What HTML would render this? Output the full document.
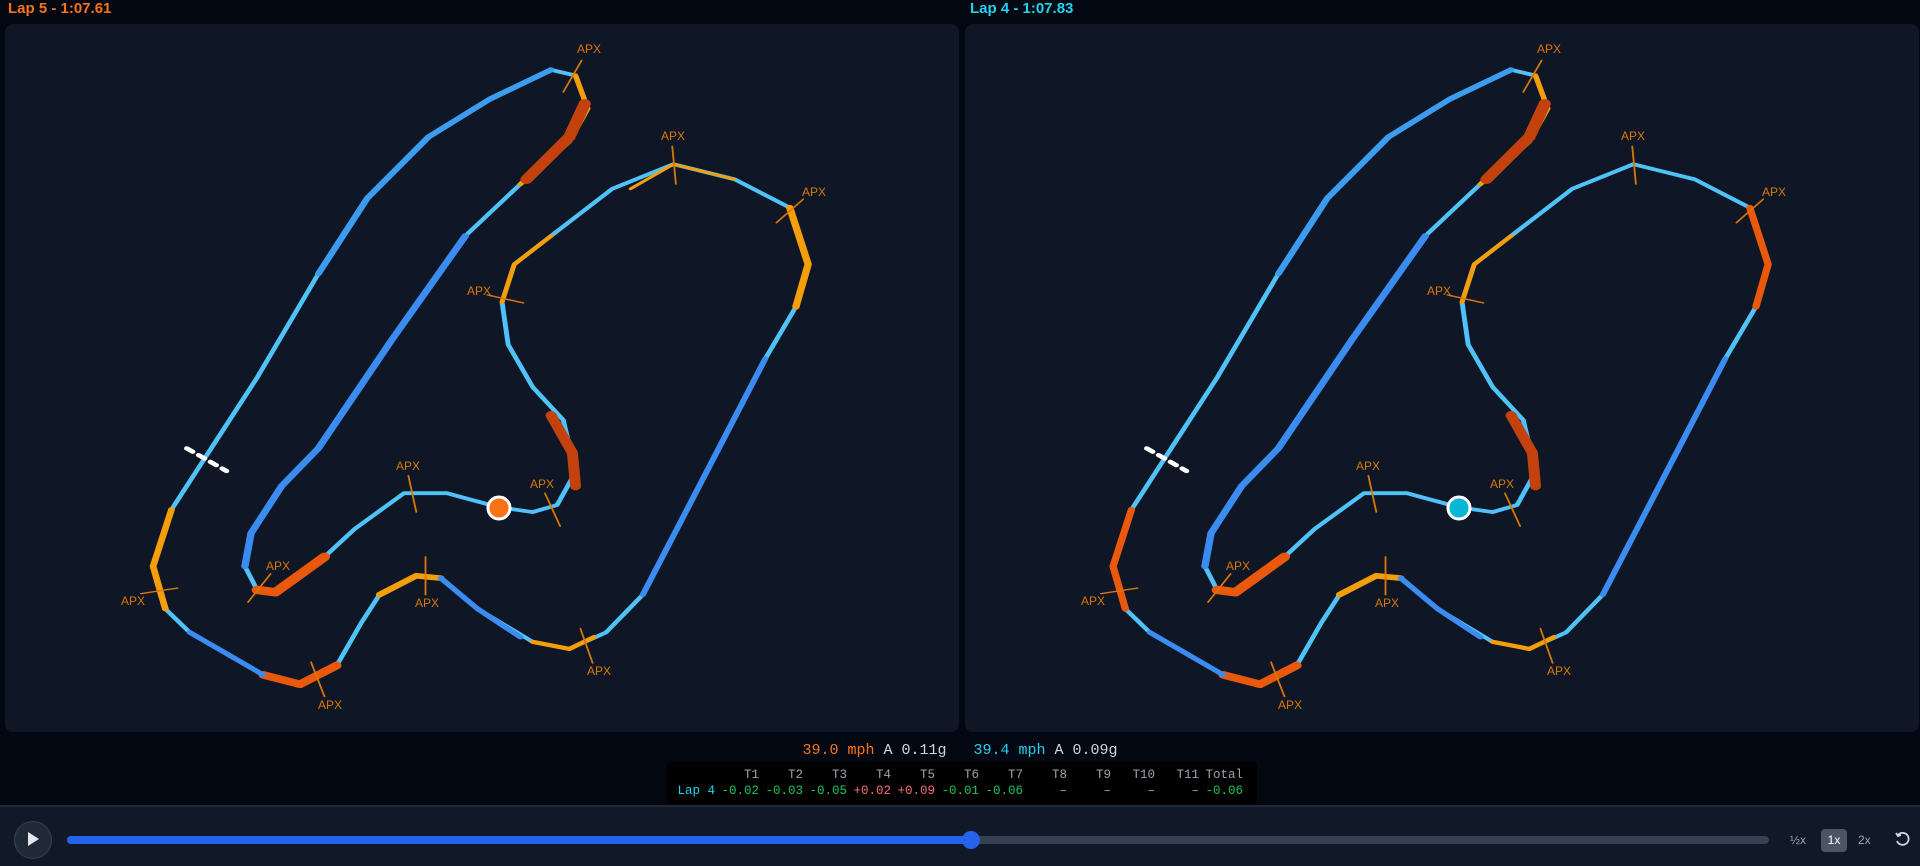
<!DOCTYPE html>
<html><head><meta charset="utf-8"><style>
body{margin:0;width:1920px;height:864px;background:#030712;overflow:hidden;font-family:"Liberation Sans",sans-serif;position:relative}
.hd{position:absolute;top:0;font-weight:bold;font-size:15px;line-height:18px}
.panel{position:absolute;top:24px;width:954px;height:708px;background:#0f1625;border-radius:8px;overflow:hidden}
svg.trk{position:absolute;left:-5px;top:-24px}
.mono{font-family:"Liberation Mono",monospace}
td{padding:0}
</style></head><body>
<div class="hd" style="left:8px;color:#f97316">Lap 5 - 1:07.61</div>
<div class="hd" style="left:970px;color:#22d3ee">Lap 4 - 1:07.83</div>

<div class="panel" style="left:5px"><svg class="trk" width="960" height="740" viewBox="0 0 1568 1568" preserveAspectRatio="none">
<g fill="none" stroke-linecap="round" stroke-linejoin="round">
<path d="M335 970 L420 800 L520 580 L600 420 L700 290 L800 210 L900 148 L940 160 L960 230 L930 300 L850 390 L760 500 L640 720 L520 950 L460 1030 L410 1130 L400 1200 L420 1250 L450 1255 L530 1180 L580 1120 L660 1045 L730 1045 L815 1075 L870 1085 L910 1070 L940 1000 L920 890 L870 820 L830 730 L820 640 L840 560 L900 500 L1000 400 L1100 348 L1200 380 L1290 440 L1320 560 L1300 650 L1250 760 L1050 1260 L990 1340 L930 1375 L870 1360 L780 1290 L720 1225 L680 1220 L620 1260 L590 1320 L550 1410 L490 1450 L430 1430 L310 1340 L270 1290 L250 1200 L280 1080 Z" stroke="#4fc3f7" stroke-width="8"/>
<path d="M520 580 L600 420 L700 290 L800 210 L900 148" stroke="#3b9cf0" stroke-width="11"/>
<path d="M760 500 L640 720 L520 950 L460 1030 L410 1130 L400 1200" stroke="#3b8cf0" stroke-width="12"/>
<path d="M1250 760 L1050 1260" stroke="#3b8cf0" stroke-width="10"/>
<path d="M940 160 L960 230 L930 300 L850 390" stroke="#f59e0b" stroke-width="9"/>
<path d="M955 220 L930 290 L860 380" stroke="#c2410c" stroke-width="20"/>
<path d="M420 1250 L450 1255 L530 1180" stroke="#ea580c" stroke-width="18"/>
<path d="M900 880 L935 960 L940 1030" stroke="#c2410c" stroke-width="18"/>
<path d="M820 640 L840 560 L900 500" stroke="#f59e0b" stroke-width="8"/>
<path d="M1290 440 L1320 560 L1300 650" stroke="#f59e0b" stroke-width="12"/>
<path d="M1030 400 L1100 348 L1200 380" stroke="#f59e0b" stroke-width="6"/>
<path d="M270 1290 L250 1200 L280 1080" stroke="#f59e0b" stroke-width="11"/>
<path d="M430 1430 L490 1450 L550 1410" stroke="#ea580c" stroke-width="16"/>
<path d="M620 1260 L680 1220 L720 1225" stroke="#f59e0b" stroke-width="12"/>
<path d="M870 1360 L930 1375 L970 1350" stroke="#f59e0b" stroke-width="9"/>
<path d="M310 1340 L430 1430" stroke="#3b8cf0" stroke-width="10"/>
<path d="M720 1225 L780 1290 L850 1350" stroke="#3b8cf0" stroke-width="10"/>
<path d="M305 950 L370 998" stroke="#fff" stroke-width="9" stroke-dasharray="12 12"/>
<g stroke="#d97706" stroke-width="3"><path d="M920 195 L950 128"/><path d="M1098 310 L1104 390"/><path d="M1268 472 L1312 422"/><path d="M796 625 L855 642"/><path d="M667 1008 L680 1085"/><path d="M890 1045 L915 1115"/><path d="M405 1276 L442 1216"/><path d="M230 1258 L290 1246"/><path d="M508 1403 L530 1476"/><path d="M695 1180 L695 1260"/><path d="M948 1332 L968 1405"/></g>
</g>
</svg>
<svg class="trk" width="960" height="740" viewBox="0 0 960 740">
<g fill="#d97706" font-size="12" font-family="Liberation Sans,sans-serif"><text x="577" y="53">APX</text><text x="661" y="140">APX</text><text x="802" y="196">APX</text><text x="467" y="295">APX</text><text x="396" y="470">APX</text><text x="530" y="488">APX</text><text x="266" y="570">APX</text><text x="121" y="605">APX</text><text x="318" y="709">APX</text><text x="415" y="607">APX</text><text x="587" y="675">APX</text></g>
<circle cx="499" cy="508" r="11" fill="#f97316" stroke="#fff" stroke-width="3"/>
</svg></div>

<div class="panel" style="left:965px"><svg class="trk" width="960" height="740" viewBox="0 0 1568 1568" preserveAspectRatio="none">
<g fill="none" stroke-linecap="round" stroke-linejoin="round">
<path d="M335 970 L420 800 L520 580 L600 420 L700 290 L800 210 L900 148 L940 160 L960 230 L930 300 L850 390 L760 500 L640 720 L520 950 L460 1030 L410 1130 L400 1200 L420 1250 L450 1255 L530 1180 L580 1120 L660 1045 L730 1045 L815 1075 L870 1085 L910 1070 L940 1000 L920 890 L870 820 L830 730 L820 640 L840 560 L900 500 L1000 400 L1100 348 L1200 380 L1290 440 L1320 560 L1300 650 L1250 760 L1050 1260 L990 1340 L930 1375 L870 1360 L780 1290 L720 1225 L680 1220 L620 1260 L590 1320 L550 1410 L490 1450 L430 1430 L310 1340 L270 1290 L250 1200 L280 1080 Z" stroke="#4fc3f7" stroke-width="8"/>
<path d="M520 580 L600 420 L700 290 L800 210 L900 148" stroke="#3b9cf0" stroke-width="11"/>
<path d="M760 500 L640 720 L520 950 L460 1030 L410 1130 L400 1200" stroke="#3b8cf0" stroke-width="12"/>
<path d="M1250 760 L1050 1260" stroke="#3b8cf0" stroke-width="10"/>
<path d="M940 160 L960 230 L930 300 L850 390" stroke="#f59e0b" stroke-width="9"/>
<path d="M955 220 L930 290 L860 380" stroke="#c2410c" stroke-width="20"/>
<path d="M420 1250 L450 1255 L530 1180" stroke="#ea580c" stroke-width="18"/>
<path d="M900 880 L935 960 L940 1030" stroke="#c2410c" stroke-width="18"/>
<path d="M820 640 L840 560 L900 500" stroke="#f59e0b" stroke-width="8"/>
<path d="M1290 440 L1320 560 L1300 650" stroke="#ea580c" stroke-width="12"/>
<path d="M270 1290 L250 1200 L280 1080" stroke="#ea580c" stroke-width="12"/>
<path d="M430 1430 L490 1450 L550 1410" stroke="#ea580c" stroke-width="16"/>
<path d="M620 1260 L680 1220 L720 1225" stroke="#f59e0b" stroke-width="12"/>
<path d="M870 1360 L930 1375 L970 1350" stroke="#f59e0b" stroke-width="9"/>
<path d="M310 1340 L430 1430" stroke="#3b8cf0" stroke-width="10"/>
<path d="M720 1225 L780 1290 L850 1350" stroke="#3b8cf0" stroke-width="10"/>
<path d="M305 950 L370 998" stroke="#fff" stroke-width="9" stroke-dasharray="12 12"/>
<g stroke="#d97706" stroke-width="3"><path d="M920 195 L950 128"/><path d="M1098 310 L1104 390"/><path d="M1268 472 L1312 422"/><path d="M796 625 L855 642"/><path d="M667 1008 L680 1085"/><path d="M890 1045 L915 1115"/><path d="M405 1276 L442 1216"/><path d="M230 1258 L290 1246"/><path d="M508 1403 L530 1476"/><path d="M695 1180 L695 1260"/><path d="M948 1332 L968 1405"/></g>
</g>
</svg>
<svg class="trk" width="960" height="740" viewBox="0 0 960 740">
<g fill="#d97706" font-size="12" font-family="Liberation Sans,sans-serif"><text x="577" y="53">APX</text><text x="661" y="140">APX</text><text x="802" y="196">APX</text><text x="467" y="295">APX</text><text x="396" y="470">APX</text><text x="530" y="488">APX</text><text x="266" y="570">APX</text><text x="121" y="605">APX</text><text x="318" y="709">APX</text><text x="415" y="607">APX</text><text x="587" y="675">APX</text></g>
<circle cx="499" cy="508" r="11" fill="#06b6d4" stroke="#fff" stroke-width="3"/>
</svg></div>

<div class="mono" style="position:absolute;left:0;width:1920px;top:742px;text-align:center;font-size:15px;color:#d1d5db"><span style="color:#f97316">39.0 mph</span> A 0.11g &nbsp; <span style="color:#22d3ee">39.4 mph</span> A 0.09g</div>
<div class="mono" style="position:absolute;left:667px;top:762px;width:590px;height:42px;background:#000;border-radius:4px;font-size:12.5px;color:#9ca3af">
<table style="border-collapse:collapse;position:absolute;right:14px;top:5px;text-align:right;font:inherit;line-height:16px"><tr><td style="width:38px"></td><td style="width:44px">T1</td><td style="width:44px">T2</td><td style="width:44px">T3</td><td style="width:44px">T4</td><td style="width:44px">T5</td><td style="width:44px">T6</td><td style="width:44px">T7</td><td style="width:44px">T8</td><td style="width:44px">T9</td><td style="width:44px">T10</td><td style="width:44px">T11</td><td style="width:44px">Total</td></tr>
<tr><td style="color:#22d3ee">Lap 4</td><td style="color:#22c55e">-0.02</td><td style="color:#22c55e">-0.03</td><td style="color:#22c55e">-0.05</td><td style="color:#f87171">+0.02</td><td style="color:#f87171">+0.09</td><td style="color:#22c55e">-0.01</td><td style="color:#22c55e">-0.06</td><td>–</td><td>–</td><td>–</td><td>–</td><td style="color:#22c55e">-0.06</td></tr></table></div>

<div style="position:absolute;left:0;top:805px;width:1920px;height:59px;background:#111827;border-top:2px solid #1f2937"></div>
<div style="position:absolute;left:14px;top:821px;width:36px;height:36px;border-radius:50%;background:#1f2937;border:1px solid #374151"></div>
<div style="position:absolute;left:28px;top:832px;width:0;height:0;border-left:11px solid #e5e7eb;border-top:7px solid transparent;border-bottom:7px solid transparent"></div>
<div style="position:absolute;left:67px;top:836px;width:1702px;height:8px;border-radius:4px;background:#374151"></div>
<div style="position:absolute;left:67px;top:836px;width:905px;height:8px;border-radius:4px;background:#2563eb"></div>
<div style="position:absolute;left:962px;top:831px;width:18px;height:18px;border-radius:50%;background:#2563eb"></div>
<div style="position:absolute;left:1790px;top:833px;font-size:12px;color:#9ca3af">½x</div>
<div style="position:absolute;left:1821px;top:829px;width:26px;height:23px;border-radius:4px;background:#4b5563;color:#fff;font-size:12px;text-align:center;line-height:23px">1x</div>
<div style="position:absolute;left:1858px;top:833px;font-size:12px;color:#9ca3af">2x</div>
<svg style="position:absolute;left:1894px;top:832px" width="16" height="16" viewBox="0 0 16 16"><path d="M4 3 A6 6 0 1 1 3 9" fill="none" stroke="#d1d5db" stroke-width="1.8"/><path d="M2 1 L4 4 L7 3" fill="none" stroke="#d1d5db" stroke-width="1.8"/></svg>
</body></html>
